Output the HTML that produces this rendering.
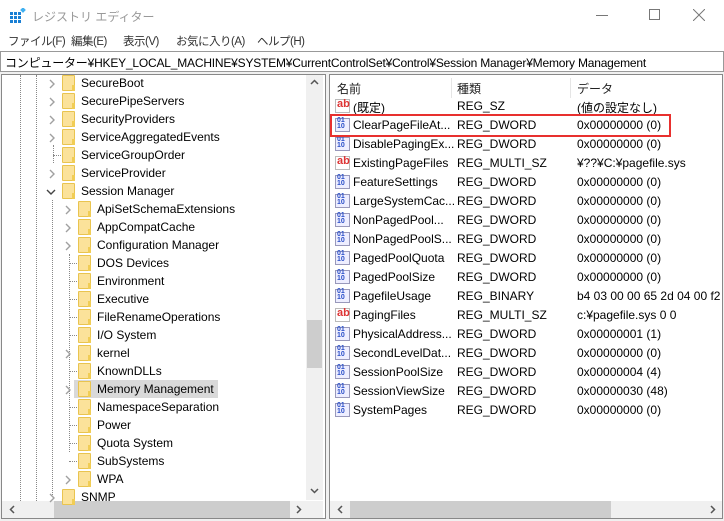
<!DOCTYPE html>
<html><head><meta charset="utf-8"><style>
*{margin:0;padding:0;box-sizing:border-box}
body{width:724px;height:521px;background:#fff;font-family:"Liberation Sans","Noto Sans CJK JP",sans-serif;font-size:12px;color:#000;position:relative;overflow:hidden}
.a{position:absolute;white-space:nowrap}
.fold{position:absolute;width:13px;height:16px;background:#fbe29a;border:1px solid #e9c44f;border-radius:1px}
.fold:after{content:"";position:absolute;right:-1px;bottom:-1px;width:3px;height:6px;background:#f1cd55}
.dv{position:absolute;border-left:1px dotted #888}
.dh{position:absolute;border-top:1px dotted #888;width:8px}
.ic{position:absolute;width:15px;height:14px}
.m{position:absolute;top:33px;color:#333;font-size:11.5px;letter-spacing:-0.5px}
</style></head><body>
<svg class="a" style="left:10px;top:8px" width="16" height="16"><g fill="#1a7fd4"><rect x="0" y="4" width="3" height="3"/><rect x="4" y="4" width="3" height="3"/><rect x="8" y="4" width="3" height="3"/><rect x="0" y="8" width="3" height="3"/><rect x="4" y="8" width="3" height="3"/><rect x="8" y="8" width="3" height="3"/><rect x="0" y="12" width="3" height="3"/><rect x="4" y="12" width="3" height="3"/><rect x="8" y="12" width="3" height="3"/></g><rect x="11" y="0" width="4" height="4" fill="#3fb0f0" transform="rotate(45 13 2)"/></svg>
<div class="a" style="left:32px;top:8px;color:#999;font-size:12px">レジストリ エディター</div>
<div class="a" style="left:596px;top:15px;width:12px;height:1px;background:#777"></div>
<div class="a" style="left:649px;top:9px;width:11px;height:11px;border:1px solid #777"></div>
<svg class="a" style="left:693px;top:9px" width="12" height="12"><path d="M0 0L12 12M12 0L0 12" stroke="#777" stroke-width="1"/></svg>
<div class="m" style="left:8px">ファイル(F)</div>
<div class="m" style="left:71px">編集(E)</div>
<div class="m" style="left:123px">表示(V)</div>
<div class="m" style="left:176px">お気に入り(A)</div>
<div class="m" style="left:257px">ヘルプ(H)</div>
<div class="a" style="left:0;top:51px;width:724px;height:21px;border:1px solid #999;background:#fff"></div>
<div class="a" style="left:5px;top:54px;letter-spacing:-0.2px">コンピューター¥HKEY_LOCAL_MACHINE¥SYSTEM¥CurrentControlSet¥Control¥Session Manager¥Memory Management</div>
<div class="a" style="left:0;top:72px;width:724px;height:449px;background:#f0f0f0"></div>
<div class="a" style="left:1px;top:74px;width:325px;height:445px;background:#fff;border:1px solid #888"></div>
<div class="a" style="left:329px;top:74px;width:394px;height:445px;background:#fff;border:1px solid #888"></div>
<div class="a" style="left:306px;top:75px;width:17px;height:425px;background:#f0f0f0"></div>
<div class="a" style="left:307px;top:320px;width:15px;height:48px;background:#cdcdcd"></div>
<svg class="a" style="left:310px;top:79px" width="9" height="6"><path d="M1 5L4.5 1.5L8 5" stroke="#555" stroke-width="1.5" fill="none"/></svg>
<svg class="a" style="left:310px;top:488px" width="9" height="6"><path d="M1 1L4.5 4.5L8 1" stroke="#555" stroke-width="1.5" fill="none"/></svg>
<div class="a" style="left:2px;top:501px;width:321px;height:17px;background:#f0f0f0"></div>
<div class="a" style="left:54px;top:501px;width:236px;height:17px;background:#cdcdcd"></div>
<svg class="a" style="left:9px;top:505px" width="6" height="9"><path d="M5 1L1.5 4.5L5 8" stroke="#555" stroke-width="1.5" fill="none"/></svg>
<svg class="a" style="left:296px;top:505px" width="6" height="9"><path d="M1 1L4.5 4.5L1 8" stroke="#555" stroke-width="1.5" fill="none"/></svg>
<div class="a" style="left:330px;top:501px;width:392px;height:17px;background:#f0f0f0"></div>
<div class="a" style="left:350px;top:501px;width:261px;height:17px;background:#cdcdcd"></div>
<svg class="a" style="left:337px;top:505px" width="6" height="9"><path d="M5 1L1.5 4.5L5 8" stroke="#555" stroke-width="1.5" fill="none"/></svg>
<svg class="a" style="left:710px;top:505px" width="6" height="9"><path d="M1 1L4.5 4.5L1 8" stroke="#555" stroke-width="1.5" fill="none"/></svg>
<div class="dv" style="left:20px;top:75px;height:426px"></div>
<div class="dv" style="left:36px;top:75px;height:426px"></div>
<div class="dv" style="left:53px;top:145px;height:18px"></div>
<div class="dv" style="left:52px;top:200px;height:295px"></div>
<div class="dv" style="left:69px;top:254px;height:198px"></div>
<div class="a" style="left:74px;top:380px;width:144px;height:18px;background:#d9d9d9"></div>
<div id="tree"></div>
<div class="a" style="left:337px;top:80px;color:#222">名前</div>
<div class="a" style="left:451px;top:78px;width:1px;height:20px;background:#e5e5e5"></div>
<div class="a" style="left:457px;top:80px;color:#222">種類</div>
<div class="a" style="left:570px;top:78px;width:1px;height:20px;background:#e5e5e5"></div>
<div class="a" style="left:577px;top:80px;color:#222">データ</div>
<div id="vals"></div>
<div class="a" style="left:330px;top:114px;width:341px;height:23px;border:2px solid #e8302e"></div>
<script>
var t=[[1,"SecureBoot",1],[1,"SecurePipeServers",1],[1,"SecurityProviders",1],[1,"ServiceAggregatedEvents",1],[1,"ServiceGroupOrder",0],[1,"ServiceProvider",1],[1,"Session Manager",2],
[2,"ApiSetSchemaExtensions",1],[2,"AppCompatCache",1],[2,"Configuration Manager",1],[2,"DOS Devices",0],[2,"Environment",0],[2,"Executive",0],[2,"FileRenameOperations",0],[2,"I/O System",0],[2,"kernel",1],[2,"KnownDLLs",0],[2,"Memory Management",1],[2,"NamespaceSeparation",0],[2,"Power",0],[2,"Quota System",0],[2,"SubSystems",0],[2,"WPA",1],[1,"SNMP",1]];
var h="";t.forEach(function(r,i){var y=74+i*18;var o=r[0]==1?0:16;
if(r[2]==1)h+='<svg class="a" style="left:'+(49+o)+'px;top:'+(y+5)+'px" width="6" height="10"><path d="M1 1L5 5L1 9" stroke="#a0a0a0" stroke-width="1.4" fill="none"/></svg>';
else if(r[2]==2)h+='<svg class="a" style="left:'+(46+o)+'px;top:'+(y+7)+'px" width="10" height="6"><path d="M1 1L5 5L9 1" stroke="#444" stroke-width="1.4" fill="none"/></svg>';
else h+='<div class="dh" style="left:'+(53+o)+'px;top:'+(y+9)+'px"></div>';
h+='<div class="fold" style="left:'+(62+o)+'px;top:'+(y+1)+'px"></div>';
h+='<div class="a" style="left:'+(81+o)+'px;top:'+(y+2)+'px">'+r[1]+'</div>';});
document.getElementById("tree").innerHTML=h;
var v=[["s","(既定)","REG_SZ","(値の設定なし)"],["d","ClearPageFileAt...","REG_DWORD","0x00000000 (0)"],["d","DisablePagingEx...","REG_DWORD","0x00000000 (0)"],["s","ExistingPageFiles","REG_MULTI_SZ","¥??¥C:¥pagefile.sys"],["d","FeatureSettings","REG_DWORD","0x00000000 (0)"],["d","LargeSystemCac...","REG_DWORD","0x00000000 (0)"],["d","NonPagedPool...","REG_DWORD","0x00000000 (0)"],["d","NonPagedPoolS...","REG_DWORD","0x00000000 (0)"],["d","PagedPoolQuota","REG_DWORD","0x00000000 (0)"],["d","PagedPoolSize","REG_DWORD","0x00000000 (0)"],["d","PagefileUsage","REG_BINARY","b4 03 00 00 65 2d 04 00 f2 5e"],["s","PagingFiles","REG_MULTI_SZ","c:¥pagefile.sys 0 0"],["d","PhysicalAddress...","REG_DWORD","0x00000001 (1)"],["d","SecondLevelDat...","REG_DWORD","0x00000000 (0)"],["d","SessionPoolSize","REG_DWORD","0x00000004 (4)"],["d","SessionViewSize","REG_DWORD","0x00000030 (48)"],["d","SystemPages","REG_DWORD","0x00000000 (0)"]];
var g="";v.forEach(function(r,i){var y=98+i*19;
if(r[0]=="s")g+='<div class="ic" style="left:335px;top:'+(y+1)+'px;border:1px solid #bbb;background:#fff"><span style="position:absolute;left:1px;top:-2px;color:#d33;font-weight:bold;font-size:11px">ab</span></div>';
else g+='<div class="ic" style="left:335px;top:'+(y+1)+'px;border:1px solid #99b;background:#eef"><span style="position:absolute;left:1px;top:-1px;color:#2a4fc8;font-weight:bold;font-size:7px;line-height:6px">01<br>10</span></div>';
g+='<div class="a" style="left:353px;top:'+(y+1)+'px">'+r[1]+'</div><div class="a" style="left:457px;top:'+(y+1)+'px">'+r[2]+'</div><div class="a" style="left:577px;top:'+(y+1)+'px;width:144px;overflow:hidden">'+r[3]+'</div>';});
document.getElementById("vals").innerHTML=g;
</script>
</body></html>
